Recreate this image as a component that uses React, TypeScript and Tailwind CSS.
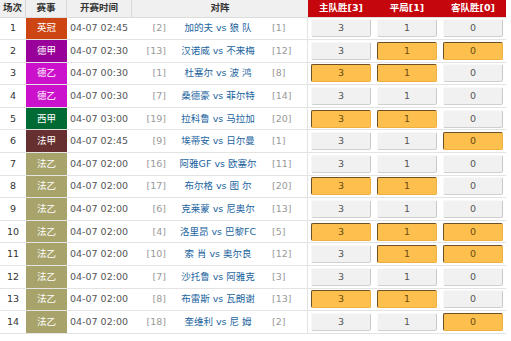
const rows = [
  { n: 1, lg: '英冠', c: 'bg-[#cc4512]', t: '04-07 02:45', hr: '[2]', m: '加的夫 vs 狼 队', ar: '[1]', sel: [false, false, false] },
  { n: 2, lg: '德甲', c: 'bg-[#990099]', t: '04-07 02:30', hr: '[13]', m: '汉诺威 vs 不来梅', ar: '[12]', sel: [false, true, true] },
  { n: 3, lg: '德乙', c: 'bg-[#cc11cc]', t: '04-07 00:30', hr: '[1]', m: '杜塞尔 vs 波 鸿', ar: '[8]', sel: [true, true, false] },
  { n: 4, lg: '德乙', c: 'bg-[#cc11cc]', t: '04-07 00:30', hr: '[7]', m: '桑德豪 vs 菲尔特', ar: '[14]', sel: [false, false, false] },
  { n: 5, lg: '西甲', c: 'bg-[#006a34]', t: '04-07 03:00', hr: '[19]', m: '拉科鲁 vs 马拉加', ar: '[20]', sel: [true, true, false] },
  { n: 6, lg: '法甲', c: 'bg-[#663030]', t: '04-07 02:45', hr: '[9]', m: '埃蒂安 vs 日尔曼', ar: '[1]', sel: [false, false, true] },
  { n: 7, lg: '法乙', c: 'bg-[#a7a36b]', t: '04-07 02:00', hr: '[16]', m: '阿雅GF vs 欧塞尔', ar: '[11]', sel: [false, false, false] },
  { n: 8, lg: '法乙', c: 'bg-[#a7a36b]', t: '04-07 02:00', hr: '[17]', m: '布尔格 vs 图 尔', ar: '[20]', sel: [true, true, false] },
  { n: 9, lg: '法乙', c: 'bg-[#a7a36b]', t: '04-07 02:00', hr: '[6]', m: '克莱蒙 vs 尼奥尔', ar: '[13]', sel: [false, false, false] },
  { n: 10, lg: '法乙', c: 'bg-[#a7a36b]', t: '04-07 02:00', hr: '[4]', m: '洛里昂 vs 巴黎FC', ar: '[5]', sel: [true, true, true] },
  { n: 11, lg: '法乙', c: 'bg-[#a7a36b]', t: '04-07 02:00', hr: '[10]', m: '索 肖 vs 奥尔良', ar: '[12]', sel: [false, true, true] },
  { n: 12, lg: '法乙', c: 'bg-[#a7a36b]', t: '04-07 02:00', hr: '[7]', m: '沙托鲁 vs 阿雅克', ar: '[3]', sel: [false, false, false] },
  { n: 13, lg: '法乙', c: 'bg-[#a7a36b]', t: '04-07 02:00', hr: '[8]', m: '布雷斯 vs 瓦朗谢', ar: '[13]', sel: [true, true, false] },
  { n: 14, lg: '法乙', c: 'bg-[#a7a36b]', t: '04-07 02:00', hr: '[18]', m: '奎维利 vs 尼 姆', ar: '[2]', sel: [false, false, true] },
]

const Pick = ({ label, on }: { label: string; on: boolean }) => (
  <div className="w-[66px] flex items-center justify-center">
    <div
      className={
        on
          ? 'w-[60px] h-[18px] flex items-center justify-center rounded-[2px] bg-[#fdbf4e] border-t border-l border-t-[#6e5024] border-l-[#6e5024] border-r border-b border-r-[#f0b040] border-b-[#f0b040] text-[#6a4a10]'
          : 'w-[60px] h-[18px] flex items-center justify-center rounded-[2px] bg-[#f1f1f1] border-t border-l border-t-[#f8f8f8] border-l-[#f8f8f8] border-r border-b border-r-[#c9c9c9] border-b-[#cfcfcf] text-[#555]'
      }
    >
      {label}
    </div>
  </div>
)

export default function App() {
  return (
    <div className="w-[511px] h-[341px] bg-white text-[9.5px] overflow-hidden font-['DejaVu_Sans','Noto_Sans_CJK_SC',sans-serif]">
      <div className="w-[506px]">
        {/* header */}
        <div className="flex h-[17.5px] border-b border-[#dcdcdc] font-bold">
          <div className="w-[26px] flex items-center justify-center bg-[#f0f0f0] border-r border-[#d8d8d8] text-[#333]">场次</div>
          <div className="w-[41px] flex items-center justify-center bg-[#f0f0f0] border-r border-[#d8d8d8] text-[#333]">赛事</div>
          <div className="w-[65px] flex items-center justify-center bg-[#f0f0f0] border-r border-[#d8d8d8] text-[#333]">开赛时间</div>
          <div className="w-[176px] flex items-center justify-center bg-[#f0f0f0] text-[#333]">对阵</div>
          <div className="w-[198px] flex bg-[#c5060d] text-white">
            <div className="w-[66px] flex items-center justify-center">主队胜[3]</div>
            <div className="w-[66px] flex items-center justify-center">平局[1]</div>
            <div className="w-[66px] flex items-center justify-center">客队胜[0]</div>
          </div>
        </div>
        {/* rows */}
        {rows.map((r) => (
          <div key={r.n} className="flex h-[22.6px] border-b border-[#e3e3e3]">
            <div className="w-[26px] flex items-center justify-center text-[#333]">{r.n}</div>
            <div className={`w-[41px] flex items-center justify-center text-white ${r.c}`}>{r.lg}</div>
            <div className="w-[65px] flex items-center pl-[3px] text-[#555] whitespace-nowrap">{r.t}</div>
            <div className="w-[36px] flex items-center justify-end pr-[2px] text-[#999]">{r.hr}</div>
            <div className="w-[100px] flex items-center justify-center text-[#22649e] whitespace-nowrap">{r.m}</div>
            <div className="w-[40px] flex items-center pl-[4px] text-[#999] border-r border-[#e3e3e3]">{r.ar}</div>
            <Pick label="3" on={r.sel[0]} />
            <Pick label="1" on={r.sel[1]} />
            <Pick label="0" on={r.sel[2]} />
          </div>
        ))}
      </div>
    </div>
  )
}
